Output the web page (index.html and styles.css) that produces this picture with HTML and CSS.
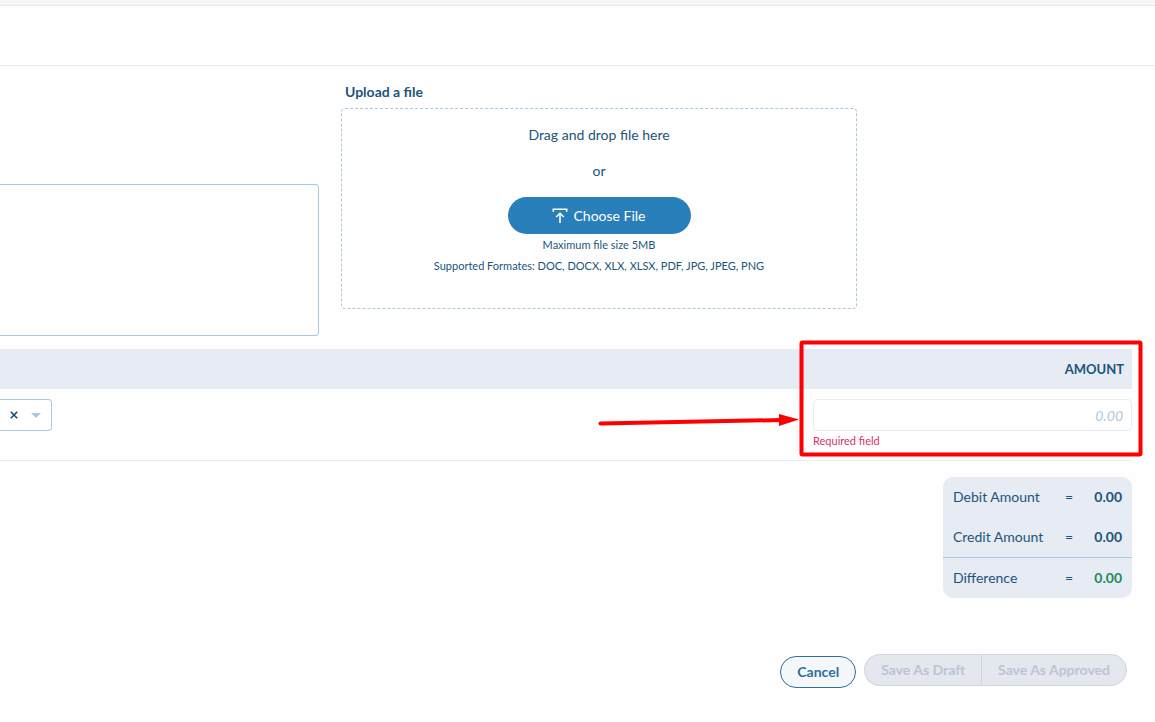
FILE: index.html
```html
<!DOCTYPE html>
<html lang="en">
<head>
    <meta charset="UTF-8">
    <meta name="viewport" content="width=device-width, initial-scale=1.0">
    <title>Journal</title>
    <link rel="stylesheet" href="styles.css">
</head>
<body>

    <div class="topbar"></div>
    <header class="page-header"></header>

    <main class="content">
        <!-- Notes and upload -->
        <div class="form-row">
            <textarea class="notes" aria-label="Notes"></textarea>
            <div class="upload">
                <h3>Upload a file</h3>
                <div class="dropzone">
                    <p>Drag and drop file here</p>
                    <p>or</p>
                    <button type="button" class="choose-btn">
                        <svg width="16" height="16" viewBox="0 0 16 16" fill="none" stroke="currentColor" stroke-width="1.6">
                            <path d="M1.3 3.8V1.3H14.7V3.8M8 15V5.5M4.2 9L8 5.3L11.8 9"/>
                        </svg>
                        Choose File
                    </button>
                    <small>Maximum file size 5MB</small>
                    <small>Supported Formates: DOC, DOCX, XLX, XLSX, PDF, JPG, JPEG, PNG</small>
                </div>
            </div>
        </div>

        <!-- Journal lines -->
        <div class="lines">
            <table>
                <thead>
                    <tr>
                        <th></th>
                        <th class="amount-col">AMOUNT</th>
                    </tr>
                </thead>
                <tbody>
                    <tr>
                        <td>
                            <div class="picker">
                                <select aria-label="Contact"><option></option></select>
                                <button type="button" class="clear-btn" aria-label="Clear">
                                    <svg width="8" height="8" viewBox="0 0 8 8" stroke="currentColor" stroke-width="1.6"><path d="M.8 .8L7.2 7.2M7.2 .8L.8 7.2"/></svg>
                                </button>
                                <svg class="caret" width="10" height="5" viewBox="0 0 10 5"><path d="M0 0H10L5 5Z" fill="currentColor"/></svg>
                            </div>
                        </td>
                        <td class="amount-col">
                            <input type="text" id="amount" placeholder="0.00" aria-label="Amount">
                            <label for="amount" class="error">Required field</label>
                        </td>
                    </tr>
                </tbody>
            </table>
            <svg class="callout" width="546" height="118" viewBox="0 0 546 118">
                <rect x="203.5" y="2.5" width="339" height="112" rx="1" fill="none" stroke="#ff0000" stroke-width="4"/>
                <path d="M2.500 83.5L184 80" stroke="#ff0000" stroke-width="4" stroke-linecap="round"/>
                <path d="M181 74L201 79.500L181 86Z" fill="#ff0000"/>
            </svg>
        </div>

        <table class="summary">
            <tr><td>Debit Amount</td><td>=</td><td class="total">0.00</td></tr>
            <tr><td>Credit Amount</td><td>=</td><td class="total">0.00</td></tr>
            <tr class="difference"><td>Difference</td><td>=</td><td class="total">0.00</td></tr>
        </table>

        <div class="actions">
            <button type="button" class="cancel-btn">Cancel</button>
            <div class="save-group">
                <button type="button" disabled>Save As Draft</button>
                <button type="button" disabled>Save As Approved</button>
            </div>
        </div>
    </main>

</body>
</html>
```
FILE: styles.css
```css
* {
    margin: 0;
    padding: 0;
    box-sizing: border-box;
}
body {
    background: #fefefe;
    color: #1b557a;
    font-family: Lato, sans-serif;
    font-size: 14px;
    line-height: 20px;
}
button, input, select, textarea {
    font: inherit;
    color: inherit;
}
.topbar {
    height: 6px;
    background: #f5f6f8;
    border-bottom: 1px solid #e9e9eb;
}
.page-header {
    height: 60px;
    border-bottom: 1px solid #e9e9eb;
}
.content {
    padding: 16px 23px 24px 0;
}
.form-row {
    display: flex;
    gap: 22px;
    align-items: flex-end;
}
.notes {
    width: 319px;
    height: 152px;
    margin-bottom: -27px;
    background: transparent;
    border: 1px solid #a9c9e0;
    border-left: 0;
    border-radius: 0 4px 4px 0;
    resize: none;
}
.upload {
    width: 516px;
}
.upload h3 {
    padding-left: 4px;
    margin-bottom: 6px;
    font-size: 14px;
    font-weight: bold;
}
.dropzone {
    display: flex;
    flex-direction: column;
    align-items: center;
    height: 201px;
    padding-top: 16px;
    border: 1px dashed #a9c9e0;
    border-radius: 4px;
}
.dropzone p {
    margin-bottom: 16px;
}
.choose-btn {
    display: flex;
    align-items: center;
    justify-content: center;
    gap: 5px;
    width: 183px;
    height: 37px;
    background: #297fb9;
    color: #fff;
    border: none;
    border-radius: 19px;
    cursor: pointer;
}
.dropzone small {
    margin-top: 1px;
    font-size: 11px;
}
.lines {
    position: relative;
    margin-top: 40px;
}
table {
    width: 100%;
    border-spacing: 0;
}
th {
    height: 40px;
    padding-right: 8px;
    background: #e7ebf4;
    font-size: 13px;
    text-align: right;
}
.lines td {
    height: 72px;
    padding-top: 10px;
    border-bottom: 1px solid #e7ebf4;
    vertical-align: top;
}
.amount-col {
    width: 319px;
}
.picker {
    position: relative;
    width: 52px;
    height: 32px;
}
.picker select {
    width: 100%;
    height: 100%;
    appearance: none;
    background: #fff;
    border: 1px solid #a9c9e0;
    border-left: 0;
    border-radius: 0 4px 4px 0;
}
.clear-btn {
    position: absolute;
    top: 8px;
    left: 6px;
    display: flex;
    align-items: center;
    justify-content: center;
    width: 16px;
    height: 16px;
    background: none;
    border: none;
    color: #124a70;
}
.caret {
    position: absolute;
    top: 14px;
    right: 11px;
    color: #a9c9e0;
    pointer-events: none;
}
.lines input {
    display: block;
    width: 100%;
    height: 32px;
    padding: 0 8px;
    background: #fff;
    border: 1px solid #e7ebf4;
    border-radius: 4px;
    text-align: right;
}
.lines input::placeholder {
    color: #a9c9e0;
    font-style: italic;
}
.error {
    display: block;
    color: #d6336c;
    font-size: 11px;
}
.callout {
    position: absolute;
    top: -9px;
    right: -12px;
    pointer-events: none;
}
.summary {
    width: 189px;
    margin: 16px 0 0 auto;
    background: #e7ebf4;
    border-radius: 10px;
}
.summary td {
    height: 40px;
}
.summary td:first-child {
    width: 122px;
    padding-left: 10px;
}
.summary .total {
    padding-right: 10px;
    font-weight: bold;
    text-align: right;
}
.summary .difference td {
    height: 41px;
    border-top: 1px solid #a9c9e0;
}
.summary .difference .total {
    color: #1e8a5a;
}
.actions {
    display: flex;
    justify-content: flex-end;
    gap: 8px;
    margin-top: 56px;
    padding-right: 5px;
}
.actions button {
    height: 32px;
    padding: 0 16px;
    font-size: 14px;
    font-weight: bold;
}
.cancel-btn {
    margin-top: 2px;
    background: #f5f7fa;
    border: 1px solid #2a6f9e;
    border-radius: 16px;
    color: #2a6f9e;
    cursor: pointer;
}
.save-group {
    display: flex;
}
.save-group button {
    background: #e4e7ee;
    border: 1px solid #d0d5e1;
    color: #bcc4d4;
}
.save-group button:first-child {
    border-right: 0;
    border-radius: 16px 0 0 16px;
}
.save-group button:last-child {
    border-radius: 0 16px 16px 0;
}
```
